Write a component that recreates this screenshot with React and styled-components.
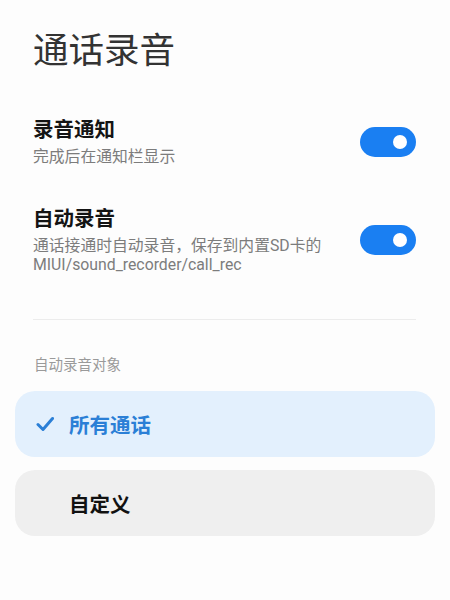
import React, { useState } from 'react';
import styled, { createGlobalStyle } from 'styled-components';

const GlobalStyle = createGlobalStyle`
  html, body {
    margin: 0;
    padding: 0;
    background: #fdfdfd;
  }

  body {
    font-family: Roboto, "Noto Sans CJK SC", sans-serif;
  }
`;

const Page = styled.div`
  width: 450px;
  min-height: 600px;
  box-sizing: border-box;
  padding: 29px 15px 0;
  background: #fdfdfd;
`;

const Title = styled.h1`
  margin: 0 0 0 18px;
  font-size: 35.5px;
  line-height: 44px;
  font-weight: 400;
  color: #333;
`;

const List = styled.div`
  margin-top: 24px;
  padding: 0 19px 0 18px;
`;

const Row = styled.div`
  display: flex;
  align-items: center;
  padding: 20px 0;
`;

const Texts = styled.div`
  flex: 1;
  min-width: 0;
`;

const RowTitle = styled.div`
  font-size: 20.5px;
  line-height: 26px;
  font-weight: 600;
  color: #141414;
`;

const RowHint = styled.div`
  margin-top: 4px;
  font-size: 15.8px;
  line-height: 19px;
  color: #7c7c7c;
`;

const Toggle = styled.button`
  flex: none;
  position: relative;
  width: 56px;
  height: 30px;
  margin-left: 20px;
  padding: 0;
  border: none;
  border-radius: 15px;
  background: ${p => (p.$on ? '#1a7ff2' : '#d9d9d9')};
  cursor: pointer;

  &::after {
    content: '';
    position: absolute;
    top: 8px;
    left: ${p => (p.$on ? '33px' : '8px')};
    width: 14px;
    height: 14px;
    border-radius: 50%;
    background: #fff;
  }
`;

const Divider = styled.hr`
  margin: 25px 0 0;
  border: none;
  height: 1px;
  background: #ececec;
`;

const SectionLabel = styled.div`
  margin: 36px 0 0 19px;
  font-size: 14.5px;
  line-height: 20px;
  color: #9a9a9a;
`;

const Options = styled.div`
  display: flex;
  flex-direction: column;
  gap: 13px;
  margin-top: 15px;
`;

const Option = styled.div`
  display: flex;
  align-items: center;
  gap: 15px;
  height: 66px;
  padding-left: 21px;
  border-radius: 20px;
  background: ${p => (p.$selected ? '#e3f0fd' : '#efefef')};
  color: ${p => (p.$selected ? '#2b7fd6' : '#111')};
  font-size: 20.5px;
  font-weight: 600;
  cursor: pointer;
`;

const CheckSlot = styled.span`
  display: flex;
  width: 18px;
  height: 16px;
`;

const Check = () => (
  <svg width="18" height="16" viewBox="0 0 18 16">
    <polyline
      points="2,8.5 7,13.5 16.5,2.5"
      fill="none"
      stroke="#2b7fd6"
      strokeWidth="3"
      strokeLinecap="round"
      strokeLinejoin="round"
    />
  </svg>
);

const App = () => {
  const [notify, setNotify] = useState(true);
  const [auto, setAuto] = useState(true);
  const [target, setTarget] = useState('all');

  const options = [
    { id: 'all', label: '所有通话' },
    { id: 'custom', label: '自定义' },
  ];

  return (
    <Page>
      <GlobalStyle />
      <Title>通话录音</Title>
      <List>
        <Row>
          <Texts>
            <RowTitle>录音通知</RowTitle>
            <RowHint>完成后在通知栏显示</RowHint>
          </Texts>
          <Toggle $on={notify} onClick={() => setNotify(!notify)} />
        </Row>
        <Row>
          <Texts>
            <RowTitle>自动录音</RowTitle>
            <RowHint>
              通话接通时自动录音，保存到内置SD卡的
              <br />
              MIUI/sound_recorder/call_rec
            </RowHint>
          </Texts>
          <Toggle $on={auto} onClick={() => setAuto(!auto)} />
        </Row>
        <Divider />
      </List>
      <SectionLabel>自动录音对象</SectionLabel>
      <Options>
        {options.map(o => (
          <Option
            key={o.id}
            $selected={target === o.id}
            onClick={() => setTarget(o.id)}
          >
            <CheckSlot>{target === o.id && <Check />}</CheckSlot>
            {o.label}
          </Option>
        ))}
      </Options>
    </Page>
  );
};

export default App;
